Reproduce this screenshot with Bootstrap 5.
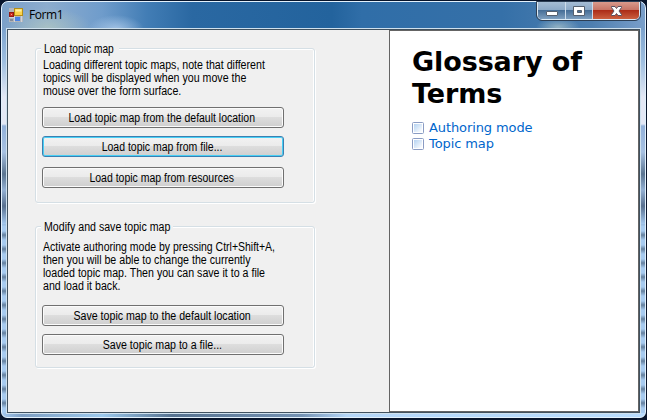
<!DOCTYPE html>
<html lang="en">
<head>
<meta charset="utf-8">
<title>Form1</title>
<link href="https://cdn.jsdelivr.net/npm/bootstrap@5.3.0/dist/css/bootstrap.min.css" rel="stylesheet">
<style>
body{width:647px;height:420px;margin:0;overflow:hidden;background:#07142b;font-family:"Liberation Sans",Arial,sans-serif;font-size:12px;line-height:13px;color:#000}
.win{width:647px;height:420px;padding:1px 1px 2px 1px;background:#07142b}
.frame{width:645px;height:417px;border:1px solid #e3f1fc;border-radius:7px 7px 6px 6px;padding:0 5px;
background:
radial-gradient(ellipse 44px 20px at 46px 26px,#b3c9c0b0,#b3c9c000),
radial-gradient(ellipse 28px 14px at 114px 27px,#b0cdeccc,#b0cdec00),
radial-gradient(ellipse 22px 9px at 556px 25px,#a9c2c9c0,#a9c2c900),
linear-gradient(90deg,#7ba0c8 0,#8cacce 45px,#6f9ccb 100px,#427db5 145px,#2a68a2 190px,#23639d 330px,#306ea8 360px,#3570a8 500px,#4e7fb0 590px,#7ba0cb 645px) 0 0/100% 28px no-repeat,
linear-gradient(180deg,#7fa5cf 28px,#9fbfe0 60px,#e3e8f5 95px,#e3e8f5 122px,#92b1da 124px,#a7c1e2 150px,#5b7591 172px,#93b0d3 188px,#58708f 204px,#a4c8ee 222px,#a4c8ee00 223px) 0 0/100% 223px no-repeat,
linear-gradient(90deg,#a4c8ee 0,#7e9fc3 20px,#9cc9ed 100px,#577391 170px,#7593b4 300px,#b4d6f8 345px,#b8dcfd 100%) 0 100%/100% 4px no-repeat,
repeating-linear-gradient(180deg,#a7cbf0 0,#a7cbf0 5px,#64809e 9px,#a7cbf0 14px)}
.titlebar{height:27px;padding:0 0 0 2px}
.titlebar svg{display:block}
.app-icon{margin-top:6px}
.caption{font-family:"Open Sans","Noto Sans",sans-serif;font-size:12px;line-height:16px;margin:5px 0 0 6px;letter-spacing:-.4px}
.caps{width:103px;height:18px;border:1px solid #dceaf5;border-top:0;border-radius:0 0 5px 5px;outline:1px solid #2c3e54;overflow:hidden}
.capbtn{width:28px;height:17px;background:linear-gradient(#a5bdd5 0,#8daac8 45%,#466e97 50%,#7e9fbf 100%);border-right:1px solid #cddceb}
.capbtn.max{width:27px}
.capbtn.x{background:linear-gradient(#d99a8c 0,#c87566 45%,#ac2d18 50%,#cb6040 100%);border:0}
.client{height:384px;border:1px solid #40515f;outline:1px solid #cfe1ee;background:#f0f0f0}
.left{width:381px;padding:12px 0 0 27px}
.group{width:280px;position:relative;padding:0 0 0 7px;isolation:isolate}
.group::before{content:"";position:absolute;z-index:-1;inset:6px 0 0 0;border:1px solid #d5dfe5;border-radius:3px;box-shadow:inset 1px 1px #fff,1px 1px #fff,inset -1px 0 #fff}
.g1{height:161px}.g2{height:148px;margin-top:17px}
.legend-text{width:78px;padding-left:3px;margin-left:-1px;background:#f0f0f0;height:13px;line-height:15px;white-space:nowrap}
.g2 .legend-text{width:132px}
.t{display:block;width:max-content;transform:scaleX(.886);transform-origin:0 50%}
.t.tight{transform:scaleX(.874)}
.g1 .legend-text .t{transform:scaleX(.85)}
.g2 .legend-text .t{transform:scaleX(.885)}
.note{white-space:nowrap;padding-left:1px;margin:4px 0 0}
.g2 .note{margin-top:8px}
.btn.wbtn{width:242px;height:21px;padding:0;font-size:12px;line-height:20px;color:#000;border:1px solid #707070;border-radius:3px;background:linear-gradient(#f2f2f2 0,#ebebeb 48%,#dddddd 50%,#cfcfcf 100%);box-shadow:inset 0 0 0 1px #fbfbfb;display:block;white-space:nowrap;margin-top:8px}
.g1 .note + .wbtn{margin-top:9px}
.g1 .wbtn:last-child{margin-top:10px}
.g2 .note + .wbtn{margin-top:12px}
.btn.wbtn{padding-right:2px}
.wbtn .t{margin:0 auto;transform-origin:50% 50%}
.btn.wbtn.focused{border-color:#3c7fb1;box-shadow:inset 0 0 0 1px #48d0f5}
.right{border:1px solid #646464;background:#fff;font-family:"DejaVu Sans",Verdana,sans-serif;padding:15px 0 0 22px}
.right h1{font-size:27px;font-weight:700;line-height:32px;margin:0 0 10px;white-space:nowrap;letter-spacing:-.1px}
.term{height:16px;font-size:13px;line-height:16px;color:#0066cc;gap:5px;text-decoration:none;letter-spacing:-.1px}
</style>
</head>
<body>
<div class="win"><div class="frame">
<header class="titlebar d-flex align-items-start">
<svg class="app-icon" width="14" height="14" viewBox="0 0 14 14"><rect width="14" height="14" fill="#b3b5b9"/><rect x="5.500" y=".5" width="8" height="7" fill="#fbd34b" stroke="#b38d17"/><path d="M6.500 1.500h6v2h-6z" fill="#fff0a0"/><rect x=".5" y="4.500" width="4" height="4" fill="#cf2d20" stroke="#8f1a16"/><path d="M2 6h1v1H2z" fill="#f5a08e"/><rect x="6" y="9" width="5" height="4" fill="#4b83e4"/><path d="M0 9.500h5M5.500 8v6M12.500 8v6" stroke="#d0d3da"/><path d="M1 11h3v2H1z" fill="#858c9a"/></svg>
<span class="caption">Form1</span>
<div class="caps d-flex ms-auto">
<div class="capbtn"><svg width="27" height="17"><rect x="8.500" y="9.500" width="11" height="4" rx=".5" fill="#fff" stroke="#55606f"/></svg></div>
<div class="capbtn max"><svg width="26" height="17"><path d="M7.500 4.500h11v9h-11zM11.500 8.500v2h4v-2z" fill="#fff" fill-rule="evenodd" stroke="#55606f"/></svg></div>
<div class="capbtn x flex-fill"><svg width="47" height="17"><path d="M18.500 4.500h3.500l1.500 2 1.500-2h3.500v1l-2.500 3.500 2.500 3.500v1H25l-1.500-2-1.500 2h-3.500v-1l2.500-3.500-2.500-3.500z" fill="#fff" stroke="#5a5160"/></svg></div>
</div>
</header>
<main class="client d-flex">
<section class="left flex-shrink-0">
<div class="group g1">
<div class="legend-text"><span class="t">Load topic map</span></div>
<p class="note"><span class="t">Loading different topic maps, note that different</span><span class="t">topics will be displayed when you move the</span><span class="t">mouse over the form surface.</span></p>
<button class="btn wbtn"><span class="t tight">Load topic map from the default location</span></button>
<button class="btn wbtn focused"><span class="t tight">Load topic map from file...</span></button>
<button class="btn wbtn"><span class="t tight">Load topic map from resources</span></button>
</div>
<div class="group g2">
<div class="legend-text"><span class="t">Modify and save topic map</span></div>
<p class="note"><span class="t tight">Activate authoring mode by pressing Ctrl+Shift+A,</span><span class="t">then you will be able to change the currently</span><span class="t">loaded topic map. Then you can save it to a file</span><span class="t">and load it back.</span></p>
<button class="btn wbtn"><span class="t">Save topic map to the default location</span></button>
<button class="btn wbtn"><span class="t">Save topic map to a file...</span></button>
</div>
</section>
<section class="right flex-fill">
<h1>Glossary of<br>Terms</h1>
<a class="term d-flex align-items-center"><svg width="12" height="12"><defs><linearGradient id="p" x2="1" y2="1"><stop stop-color="#b5d3f2"/><stop offset="1" stop-color="#fff"/></linearGradient></defs><rect x=".5" y=".5" width="11" height="11" rx="1" fill="#fff" stroke="#8a9cc4"/><rect x="2" y="2" width="8" height="8" fill="url(#p)"/></svg><span>Authoring mode</span></a>
<a class="term d-flex align-items-center"><svg width="12" height="12"><rect x=".5" y=".5" width="11" height="11" rx="1" fill="#fff" stroke="#8a9cc4"/><rect x="2" y="2" width="8" height="8" fill="url(#p)"/></svg><span>Topic map</span></a>
</section>
</main>
</div></div>
<script src="https://cdn.jsdelivr.net/npm/bootstrap@5.3.0/dist/js/bootstrap.bundle.min.js"></script>
</body>
</html>
